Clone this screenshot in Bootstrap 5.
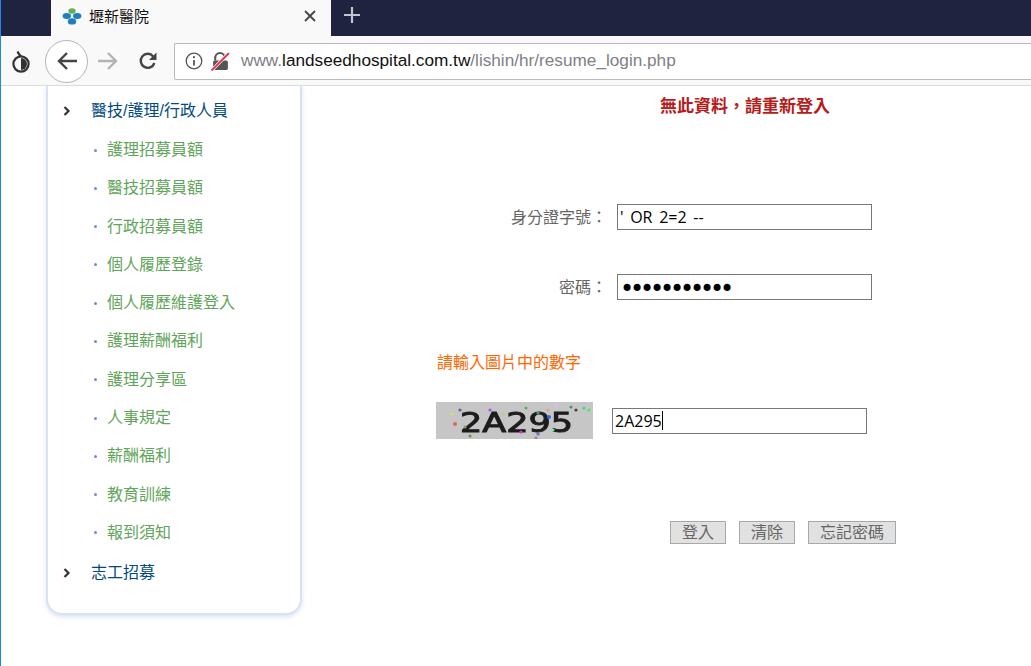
<!DOCTYPE html>
<html lang="zh-Hant">
<head>
<meta charset="utf-8">
<title>壢新醫院</title>
<link rel="stylesheet" href="https://cdn.jsdelivr.net/npm/bootstrap@5.3.0/dist/css/bootstrap.min.css">
<style>
html,body{height:100%;overflow:hidden}
body{background:#fff;font-family:"Liberation Sans","Noto Sans CJK TC",sans-serif;font-size:16px;line-height:1;border-left:1px solid #1e88e5}
.tabstrip{height:36px;background:#20233f;padding-left:50px}
.tabitem{width:280px;height:36px;background:#f9f9fa;padding:0 14px 4px 11px;color:#111;font-size:15px}
.tabname{margin-left:7px}
.tabclose{margin-left:auto}
.newtab{margin-left:12px;margin-bottom:6px}
.toolbar{height:50px;background:#f9f9fa;border-bottom:1px solid #ddd;padding-left:10px;padding-top:1px}
.backring{width:43px;height:43px;border:1px solid #b4b4b4;border-radius:50%;background:#fff;margin-left:14px}
.fwdbtn{margin-left:9px}
.reloadbtn{margin-left:19px}
.urlbox{flex:1;height:37px;margin-left:16px;background:#fff;border:1px solid #bbb;border-right:0;border-radius:2px 0 0 2px;padding-left:10px}
.urltext{margin-left:11px;font-size:17.2px;color:#808085;white-space:nowrap}
.urltext b{font-weight:400;color:#111}
.pagearea{height:580px}
.sidepanel{width:256px;height:529px;margin-left:45px;background:#fff;border:2px solid #d9e2f2;border-top:0;border-radius:0 0 16px 16px;box-shadow:0 2px 4px rgba(190,205,230,.55);padding-top:17px}
.menuhead{height:16px;padding-left:15px;color:#004a80;margin-bottom:23px}
.menuhead span{margin-left:20px}
.menuhead:last-child{margin-bottom:0}
.menusub{height:16px;padding-left:46px;color:#5fa55a;margin-bottom:22.3px}
.menusub:nth-last-child(2){margin-bottom:24.3px}
.menusub::before{content:"";width:3px;height:3px;border-radius:50%;background:#6f8fc4;margin-right:10px}
.formpane{width:729px;padding-left:134px}
.errline{color:#b71c1c;font-weight:700;font-size:17px;margin-top:12px;padding-left:224px;height:17px}
.fieldline{height:26px;margin-top:44px}
.fieldline.firstfield{margin-top:89px}
.fieldlabel{width:169px;margin-left:2px;text-align:right;color:#666;margin-right:10px;padding-top:6px}
.fieldinput{width:255px;height:26px;border:1px solid #777;background:#fff;padding:0 2px;font-family:"Open Sans","Noto Sans",sans-serif;font-size:16px;color:#000;border-radius:0;outline:0;word-spacing:2.5px}
.fieldinput[type=password]{font-family:"DejaVu Sans",sans-serif;font-size:24px;letter-spacing:-4.16px;padding-top:4px}
.hintline{color:#f60;margin-top:55px;height:16px;padding-left:1px}
.captchaline{margin-top:31px;height:37px}
.captchaimg{width:157px;height:37px;display:block}
.captchainput{margin-left:19px;width:255px}
.caret{display:inline-block;width:1px;height:19px;background:#000;vertical-align:-3px}
.fieldbox{display:flex;align-items:center;line-height:1}
.btnline{margin-top:82px;padding-left:234px;gap:13px}
.plainbtn{height:23px;background:#e1e1e1;border:1px solid #a8a8a8;color:#666;font-size:16px;padding:0;line-height:20px;border-radius:0}
.plainbtn.w56{width:56px}
.plainbtn.w88{width:88px}
</style>
</head>
<body>
<div class="tabstrip d-flex align-items-center">
  <div class="tabitem d-flex align-items-center">
    <svg width="20" height="20" viewBox="0 0 20 20"><ellipse cx="10" cy="5" rx="3.6" ry="2.8" fill="#5fb04a"/><ellipse cx="4.8" cy="10" rx="4.2" ry="3" fill="#1b7fc0"/><ellipse cx="15.2" cy="10" rx="4.2" ry="3" fill="#1b7fc0"/><ellipse cx="10" cy="15.4" rx="4.2" ry="3.2" fill="#1b7fc0"/></svg>
    <span class="tabname">壢新醫院</span>
    <svg class="tabclose" width="14" height="14" viewBox="0 0 14 14"><path d="M2 2l10 10M12 2L2 12" stroke="#444" stroke-width="1.8" fill="none"/></svg>
  </div>
  <svg class="newtab" width="18" height="18" viewBox="0 0 18 18"><path d="M9 1v16M1 9h16" stroke="#c4c5cf" stroke-width="2.2" fill="none"/></svg>
</div>
<div class="toolbar d-flex align-items-center">
  <svg width="20" height="24" viewBox="0 0 20 24"><circle cx="10" cy="15" r="7.6" fill="none" stroke="#333" stroke-width="2.2"/><path d="M10 9a6 6 0 0 1 0 12z" fill="#333"/><path d="M6.5 2.5c1 2.5 2.5 4 3.5 5" stroke="#333" stroke-width="2.2" fill="none"/></svg>
  <div class="backring d-flex align-items-center justify-content-center">
    <svg width="22" height="20" viewBox="0 0 22 20"><path d="M21 10H3M11 2l-8 8 8 8" stroke="#444" stroke-width="2.4" fill="none"/></svg>
  </div>
  <svg class="fwdbtn" width="22" height="20" viewBox="0 0 22 20"><path d="M1 10h18M11 2l8 8-8 8" stroke="#b3b3b3" stroke-width="2.4" fill="none"/></svg>
  <svg class="reloadbtn" width="20" height="20" viewBox="0 0 20 20"><path d="M16.4 12a7 7 0 1 1-1.2-6.6" stroke="#444" stroke-width="2.4" fill="none"/><path d="M18.5 1.5v7.5h-7.5z" fill="#444"/></svg>
  <div class="urlbox d-flex align-items-center">
    <svg width="18" height="18" viewBox="0 0 18 18"><circle cx="9" cy="9" r="7.8" fill="none" stroke="#555" stroke-width="1.3"/><circle cx="9" cy="5.2" r="1.1" fill="#555"/><path d="M9 8v5.4" stroke="#555" stroke-width="1.8"/></svg>
    <svg class="ms-2" width="19" height="19" viewBox="0 0 18 18"><path d="M4 8V5.5a4.5 4.5 0 0 1 9 0" stroke="#555" stroke-width="2" fill="none"/><rect x="2" y="8" width="14" height="9" rx="1.5" fill="#555"/><path d="M1 17L17 1" stroke="#fff" stroke-width="3"/><path d="M0.5 17.5L17 1" stroke="#e22850" stroke-width="1.8"/></svg>
    <div class="urltext">www.<b>landseedhospital.com.tw</b>/lishin/hr/resume_login.php</div>
  </div>
</div>
<div class="pagearea d-flex">
  <nav class="sidepanel flex-shrink-0">
    <div class="menuhead d-flex align-items-center"><svg width="8" height="10" viewBox="0 0 8 10"><path d="M1.5 1l4 4-4 4" stroke="#333" stroke-width="2.2" fill="none"/></svg><span>醫技/護理/行政人員</span></div>
    <div class="menusub d-flex align-items-center">護理招募員額</div>
    <div class="menusub d-flex align-items-center">醫技招募員額</div>
    <div class="menusub d-flex align-items-center">行政招募員額</div>
    <div class="menusub d-flex align-items-center">個人履歷登錄</div>
    <div class="menusub d-flex align-items-center">個人履歷維護登入</div>
    <div class="menusub d-flex align-items-center">護理薪酬福利</div>
    <div class="menusub d-flex align-items-center">護理分享區</div>
    <div class="menusub d-flex align-items-center">人事規定</div>
    <div class="menusub d-flex align-items-center">薪酬福利</div>
    <div class="menusub d-flex align-items-center">教育訓練</div>
    <div class="menusub d-flex align-items-center">報到須知</div>
    <div class="menuhead d-flex align-items-center"><svg width="8" height="10" viewBox="0 0 8 10"><path d="M1.5 1l4 4-4 4" stroke="#333" stroke-width="2.2" fill="none"/></svg><span>志工招募</span></div>
  </nav>
  <main class="formpane">
    <div class="errline">無此資料，請重新登入</div>
    <div class="fieldline firstfield d-flex">
      <div class="fieldlabel flex-shrink-0">身分證字號：</div>
      <input class="fieldinput" type="text" value="' OR 2=2 --">
    </div>
    <div class="fieldline d-flex">
      <div class="fieldlabel flex-shrink-0">密碼：</div>
      <input class="fieldinput" type="password" value="12345678901">
    </div>
    <div class="hintline">請輸入圖片中的數字</div>
    <div class="captchaline d-flex align-items-center">
      <svg class="captchaimg flex-shrink-0" viewBox="0 0 157 37">
        <defs><filter id="soft"><feGaussianBlur stdDeviation="0.45"/></filter></defs>
        <rect width="157" height="37" fill="#c6c6c6"/>
        <text x="24" y="30" font-family="DejaVu Sans,Liberation Sans,sans-serif" font-size="27" textLength="113" lengthAdjust="spacingAndGlyphs" fill="#1c1c1c" stroke="#1c1c1c" stroke-width="1" filter="url(#soft)">2A295</text>
        <g filter="url(#soft)">
          <circle cx="24" cy="8" r="1.6" fill="#667"/><circle cx="16" cy="12" r="1.6" fill="#dddd66"/><circle cx="19" cy="22" r="2" fill="#d86a5a"/><circle cx="54" cy="8" r="1.6" fill="#a855e8"/><circle cx="67" cy="12" r="1.6" fill="#c8c878"/><circle cx="90" cy="6" r="1.6" fill="#5cae6c"/><circle cx="112" cy="8" r="1.6" fill="#e8a08c"/><circle cx="120" cy="4" r="1.6" fill="#e8b8e8"/><circle cx="135" cy="5" r="1.6" fill="#4a9a6a"/><circle cx="140" cy="8" r="1.6" fill="#5a3a3a"/><circle cx="148" cy="6" r="1.6" fill="#3fcfa8"/><circle cx="153" cy="8" r="1.6" fill="#55e855"/><circle cx="85" cy="30" r="1.6" fill="#e82ac8"/><circle cx="102" cy="32" r="1.6" fill="#5a7ac8"/><circle cx="100" cy="36" r="1.6" fill="#b07a9a"/><circle cx="34" cy="34" r="1.6" fill="#5a9a4a"/><circle cx="29" cy="25" r="1.6" fill="#7aa84a"/><circle cx="102" cy="11" r="1.6" fill="#3a9a8a"/><circle cx="113" cy="15" r="2" fill="#2a6ae8"/><circle cx="117" cy="28" r="1.6" fill="#6ae8a8"/>
        </g>
      </svg>
      <div class="fieldinput captchainput fieldbox">2A295<i class="caret"></i></div>
    </div>
    <div class="btnline d-flex">
      <button class="plainbtn w56" type="button">登入</button>
      <button class="plainbtn w56" type="button">清除</button>
      <button class="plainbtn w88" type="button">忘記密碼</button>
    </div>
  </main>
</div>
<script src="https://cdn.jsdelivr.net/npm/bootstrap@5.3.0/dist/js/bootstrap.bundle.min.js"></script>
</body>
</html>
